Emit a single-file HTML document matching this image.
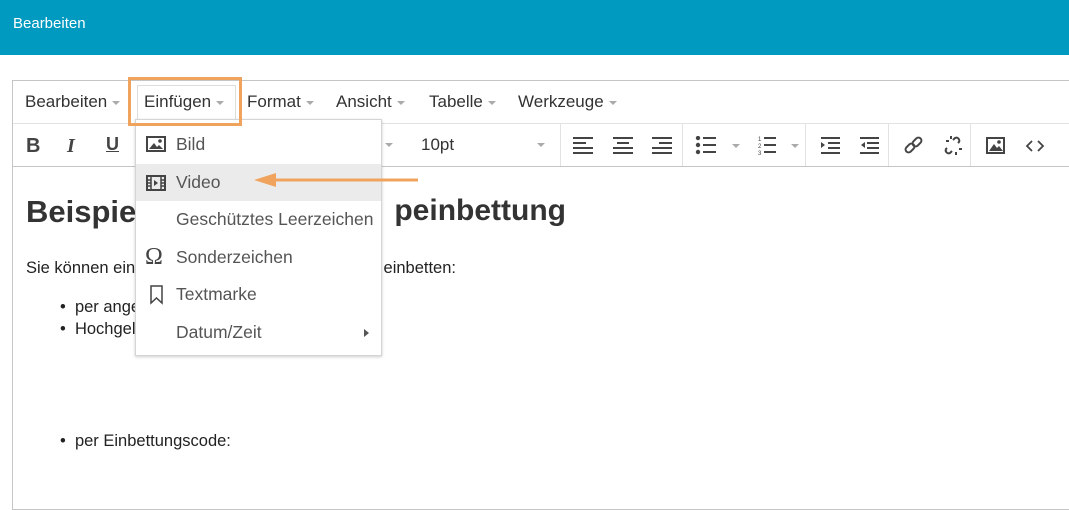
<!DOCTYPE html>
<html><head><meta charset="utf-8"><style>
*{margin:0;padding:0;box-sizing:border-box}
body{width:1069px;height:496px;overflow:hidden;background:#fff;font-family:"Liberation Sans",sans-serif;position:relative;color:#333}
.hdr{position:absolute;left:0;top:0;width:1069px;height:55px;background:#0099bf;color:#fff;font-size:15px;padding:15px 13px}
.ed{position:absolute;left:12px;top:80px;width:1070px;height:430px;border:1px solid #c5c5c5}
.mb{position:absolute;left:0;top:0;width:100%;height:43px;border-bottom:1px solid #e2e2e2}
.mi{position:absolute;top:11px;font-size:17px;color:#333}
.car{display:inline-block;width:0;height:0;border-left:4px solid transparent;border-right:4px solid transparent;border-top:4px solid #aaa;vertical-align:middle;margin-left:5px}
.tb{position:absolute;left:0;top:43px;width:100%;height:43px;border-bottom:1px solid #c5c5c5}
.ab{position:absolute}
.sep{position:absolute;top:0;width:1px;height:42px;background:#e2e2e2}
.t{position:absolute;font-size:15px;color:#333}
.menu{position:absolute;left:135px;top:119px;width:247px;height:237px;background:#fff;border:1px solid #d5d5d5;box-shadow:0 1px 3px rgba(0,0,0,.2)}
.it{position:absolute;left:0;width:100%;height:37px;font-size:17.5px;color:#555;padding-left:40px;line-height:37px}
.bt{font-size:16.5px;color:#222}
</style></head><body>
<div class="hdr">Bearbeiten</div>
<div class="ed">
 <div class="mb">
  <span class="mi" style="left:12px">Bearbeiten<span class="car"></span></span>
  <div class="ab" style="left:124px;top:4px;width:99px;height:37px;border:1px solid #ddd"></div>
  <span class="mi" style="left:131px">Einfügen<span class="car"></span></span>
  <span class="mi" style="left:234px">Format<span class="car"></span></span>
  <span class="mi" style="left:323px">Ansicht<span class="car"></span></span>
  <span class="mi" style="left:416px">Tabelle<span class="car"></span></span>
  <span class="mi" style="left:505px">Werkzeuge<span class="car"></span></span>
 </div>
 <div class="tb">
  <span class="t" style="left:13px;top:11px;font-weight:bold;font-size:20px;color:#444">B</span>
  <span class="t" style="left:54px;top:11px;font-style:italic;font-weight:bold;font-size:20px;color:#444;font-family:'Liberation Serif',serif">I</span>
  <span class="t" style="left:93px;top:10px;font-weight:bold;font-size:18px;color:#444;text-decoration:underline">U</span>
  <span class="car" style="position:absolute;left:372px;top:19px;margin:0"></span>
  <span class="t" style="left:408px;top:11px;font-size:17px">10pt</span>
  <span class="car" style="position:absolute;left:524px;top:19px;margin:0"></span>
  <div class="sep" style="left:547px"></div>
  <svg class="ab" style="left:560px;top:12px" width="480" height="20" fill="#444">
   <g><rect x="0" y="1" width="20" height="2"/><rect x="0" y="6" width="13" height="2"/><rect x="0" y="11" width="20" height="2"/><rect x="0" y="16" width="20" height="2"/></g>
   <g transform="translate(40,0)"><rect x="0" y="1" width="20" height="2"/><rect x="4" y="6" width="12" height="2"/><rect x="0" y="11" width="20" height="2"/><rect x="0" y="16" width="20" height="2"/></g>
   <g transform="translate(79,0)"><rect x="0" y="1" width="20" height="2"/><rect x="7" y="6" width="13" height="2"/><rect x="0" y="11" width="20" height="2"/><rect x="0" y="16" width="20" height="2"/></g>
   <g transform="translate(123,0)"><circle cx="2" cy="2" r="2.2"/><circle cx="2" cy="9" r="2.2"/><circle cx="2" cy="16" r="2.2"/><rect x="7" y="1" width="13" height="2"/><rect x="7" y="8" width="13" height="2"/><rect x="7" y="15" width="13" height="2"/></g>
   <path d="M159 8 l8 0 l-4 4z" fill="#aaa"/>
   <g transform="translate(185,0)" font-size="6" font-family="Liberation Sans"><text x="0" y="5">1</text><text x="0" y="12">2</text><text x="0" y="19">3</text><rect x="6" y="1" width="12" height="2"/><rect x="6" y="8" width="12" height="2"/><rect x="6" y="15" width="12" height="2"/></g>
   <path d="M218 8 l8 0 l-4 4z" fill="#aaa"/>
   <g transform="translate(248,0)"><rect x="0" y="1" width="19" height="2"/><path d="M0 6 l4 3 l-4 3z"/><rect x="7" y="6" width="12" height="2"/><rect x="7" y="11" width="12" height="2"/><rect x="0" y="16" width="19" height="2"/></g>
   <g transform="translate(287,0)"><rect x="0" y="1" width="19" height="2"/><path d="M5 6 l-4 3 l4 3z"/><rect x="7" y="6" width="12" height="2"/><rect x="7" y="11" width="12" height="2"/><rect x="0" y="16" width="19" height="2"/></g>
   <g transform="translate(331,0)" fill="none" stroke="#444" stroke-width="2"><rect x="1" y="9" width="10" height="6" rx="3" transform="rotate(-45 6 12)"/><rect x="8" y="3" width="10" height="6" rx="3" transform="rotate(-45 13 6)"/></g>
   <g transform="translate(370,0)" fill="none" stroke="#444" stroke-width="2"><path d="M4 12 l-1 1 a3 3 0 0 0 4 4 l2 -2"/><path d="M15 7 l1 -1 a3 3 0 0 0 -4 -4 l-2 2"/><path d="M8 0 v3 M3 5 h3 M13 19 v-3 M19 13 h-3"/></g>
   <g transform="translate(413,1)"><rect x="1" y="1" width="17" height="15" fill="none" stroke="#444" stroke-width="2"/><path d="M3 14 l5 -7 l3 4 l2 -2 l4 5z"/><circle cx="13" cy="5" r="1.8"/></g>
   <path d="M459 5 l-5 5 l5 5 M465 5 l5 5 l-5 5" fill="none" stroke="#444" stroke-width="1.8"/>
  </svg>
  <div class="sep" style="left:669px"></div>
  <div class="sep" style="left:792px"></div>
  <div class="sep" style="left:875px"></div>
  <div class="sep" style="left:957px"></div>
 </div>
 <div class="ab" style="left:13px;top:113px;font-size:31px;font-weight:bold;color:#333">Beispie</div>
 <div class="ab" style="right:515px;top:113px;font-size:30px;font-weight:bold;color:#333">peinbettung</div>
 <div class="ab bt" style="left:13px;top:178px">Sie können ein</div>
 <div class="ab bt" style="right:625px;top:178px">einbetten:</div>
 <div class="ab bt" style="left:47px;top:217px">•&nbsp; per ange</div>
 <div class="ab bt" style="left:47px;top:239px">•&nbsp; Hochgel</div>
 <div class="ab bt" style="left:47px;top:351px">•&nbsp; per Einbettungscode:</div>
</div>
<div class="menu">
 <div class="it" style="top:6px"><svg class="ab" style="left:10px;top:10px" width="20" height="17"><rect x="1" y="1" width="18" height="14" fill="none" stroke="#444" stroke-width="2"/><path d="M3 13 l5 -6 l3 4 l2 -2 l4 4z" fill="#444"/><circle cx="14" cy="5" r="1.8" fill="#444"/></svg>Bild</div>
 <div class="it" style="top:44px;background:#ebebeb"><svg class="ab" style="left:10px;top:11px" width="20" height="16"><rect x="1" y="1" width="18" height="14" fill="none" stroke="#444" stroke-width="2"/><path d="M5 1v14M15 1v14M1 5h4M1 8h4M1 11h4M15 5h4M15 8h4M15 11h4" stroke="#444" stroke-width="1.5"/><path d="M8 5 l4 3 l-4 3z" fill="#444"/></svg>Video</div>
 <div class="it" style="top:81px">Geschütztes Leerzeichen</div>
 <div class="it" style="top:119px"><span class="ab" style="left:9px;top:0;font-size:24px;color:#444;font-family:'Liberation Serif',serif">Ω</span>Sonderzeichen</div>
 <div class="it" style="top:156px"><svg class="ab" style="left:14px;top:9px" width="14" height="20"><path d="M1 1h11v17l-5.5-5l-5.5 5z" fill="none" stroke="#444" stroke-width="1.5"/></svg>Textmarke</div>
 <div class="it" style="top:194px">Datum/Zeit<span class="ab" style="left:228px;top:15px;width:0;height:0;border-top:4px solid transparent;border-bottom:4px solid transparent;border-left:5px solid #555"></span></div>
</div>
<div class="ab" style="left:128px;top:77px;width:114px;height:49px;border:3px solid #f0a35c"></div>
<svg class="ab" style="left:250px;top:170px" width="175" height="20"><path d="M18 10 H168" stroke="#f0a35c" stroke-width="3"/><path d="M4 10 L26 3 L26 17z" fill="#f0a35c"/></svg>
</body></html>
